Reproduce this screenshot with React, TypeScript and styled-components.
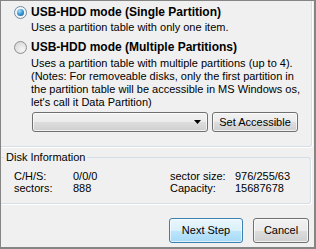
import React from 'react'
import styled, { createGlobalStyle, css } from 'styled-components'

const GlobalStyle = createGlobalStyle`
  html, body {
    margin: 0;
    padding: 0;
    background: #f0f0f0;
  }
  body {
    font-family: "Liberation Sans", Arial, sans-serif;
    font-size: 11px;
    color: #000;
  }
`

const Window = styled.div`
  box-sizing: border-box;
  width: 316px;
  height: 249px;
  background: #f0f0f0;
  border-style: solid;
  border-color: #858585;
  border-width: 1px 2px 2px 1px;
  display: flex;
  flex-direction: column;
  overflow: hidden;
`

// upper group box, its top and left edges fall outside the crop
const ModeBox = styled.div`
  margin-right: 2px;
  padding: 5px 0 14px 13px;
  border-right: 1px solid #d5dfe5;
  border-bottom: 1px solid #d5dfe5;
  border-bottom-right-radius: 3px;
  box-shadow: 1px 1px 0 #fff;
`

const Option = styled.div<{ $gap?: number }>`
  display: grid;
  grid-template-columns: 13px 1fr;
  column-gap: 4px;
  margin-top: ${p => p.$gap || 0}px;
`

const Radio = styled.span<{ $checked?: boolean }>`
  box-sizing: border-box;
  width: 13px;
  height: 13px;
  border-radius: 50%;
  border: 1px solid #8e8f8f;
  background: radial-gradient(circle at 65% 70%, #f6f6f6 0%, #e0e0e0 60%, #cfcfcf 100%);
  display: flex;
  align-items: center;
  justify-content: center;
  ${p => p.$checked && css`
    border-color: #6e8aa4;
    background: #f4f4f4;
    &::after {
      content: '';
      width: 7px;
      height: 7px;
      border-radius: 50%;
      background: radial-gradient(circle at 35% 30%, #9fe0ff 0%, #3f9ed8 45%, #0f4f86 100%);
    }
  `}
`

const Title = styled.div`
  font-weight: bold;
  font-size: 12px;
  line-height: 13px;
  white-space: nowrap;
`

const Desc = styled.div<{ $gap: number }>`
  grid-column: 2;
  margin-top: ${p => p.$gap}px;
  line-height: 13px;
  white-space: nowrap;
`

const ComboRow = styled.div`
  grid-column: 2;
  display: flex;
  gap: 4px;
  margin: 3px 0 0 1px;
`

const chrome = css`
  box-sizing: border-box;
  height: 20px;
  border: 1px solid #707070;
  border-radius: 3px;
  background: linear-gradient(#f2f2f2 0%, #ebebeb 50%, #dddddd 51%, #cfcfcf 100%);
  box-shadow: inset 0 0 0 1px rgba(255, 255, 255, 0.7);
`

const Combo = styled.div`
  ${chrome};
  width: 176px;
  display: flex;
  align-items: center;
  justify-content: flex-end;
  padding-right: 6px;
`

const Button = styled.button<{ $width: number; $height?: number; $primary?: boolean }>`
  ${chrome};
  width: ${p => p.$width}px;
  height: ${p => p.$height || 20}px;
  padding: 0;
  font: inherit;
  color: #000;
  line-height: 1;
  ${p => p.$primary && css`
    border-color: #3c7fb1;
    background: linear-gradient(#eaf6fd 0%, #d9f0fc 50%, #bee6fd 51%, #a7d9f5 100%);
    box-shadow: inset 0 0 0 1px rgba(255, 255, 255, 0.6);
  `}
`

const InfoGroup = styled.fieldset`
  margin: 4px 3px 0 0;
  padding: 6px 0 9px 0;
  border: 1px solid #d5dfe5;
  border-left: none;
  border-radius: 0 3px 3px 0;
  box-shadow: 1px 1px 0 #fff;
  min-width: 0;
`

const Caption = styled.legend`
  margin-left: 3px;
  padding: 0 2px;
  line-height: 13px;
`

const InfoGrid = styled.div`
  display: grid;
  grid-template-columns: 59px 97px 65px auto;
  margin-left: 13px;
  line-height: 12px;
`

const Footer = styled.div`
  display: flex;
  justify-content: flex-end;
  gap: 10px;
  margin: 14px 5px 0 0;
`

const Arrow = () => (
  <svg width="7" height="4" viewBox="0 0 7 4">
    <polygon points="0,0 7,0 3.5,4" fill="#000" />
  </svg>
)

const info: [string, string, string, string][] = [
  ['C/H/S:', '0/0/0', 'sector size:', '976/255/63'],
  ['sectors:', '888', 'Capacity:', '15687678'],
]

export default function App() {
  return (
    <>
      <GlobalStyle />
      <Window>
        <ModeBox>
          <Option>
            <Radio $checked />
            <Title>USB-HDD mode (Single Partition)</Title>
            <Desc $gap={2}>Uses a partition table with only one item.</Desc>
          </Option>
          <Option $gap={7}>
            <Radio />
            <Title>USB-HDD mode (Multiple Partitions)</Title>
            <Desc $gap={3}>
              Uses a partition table with multiple partitions (up to 4).<br />
              (Notes: For removeable disks, only the first partition in<br />
              the partition table will be accessible in MS Windows os,<br />
              let's call it Data Partition)
            </Desc>
            <ComboRow>
              <Combo>
                <Arrow />
              </Combo>
              <Button $width={86}>Set Accessible</Button>
            </ComboRow>
          </Option>
        </ModeBox>
        <InfoGroup>
          <Caption>Disk Information</Caption>
          <InfoGrid>
            {info.map(row => row.map((cell, i) => <span key={row[0] + i}>{cell}</span>))}
          </InfoGrid>
        </InfoGroup>
        <Footer>
          <Button $width={74} $height={25} $primary>Next Step</Button>
          <Button $width={56} $height={25}>Cancel</Button>
        </Footer>
      </Window>
    </>
  )
}
